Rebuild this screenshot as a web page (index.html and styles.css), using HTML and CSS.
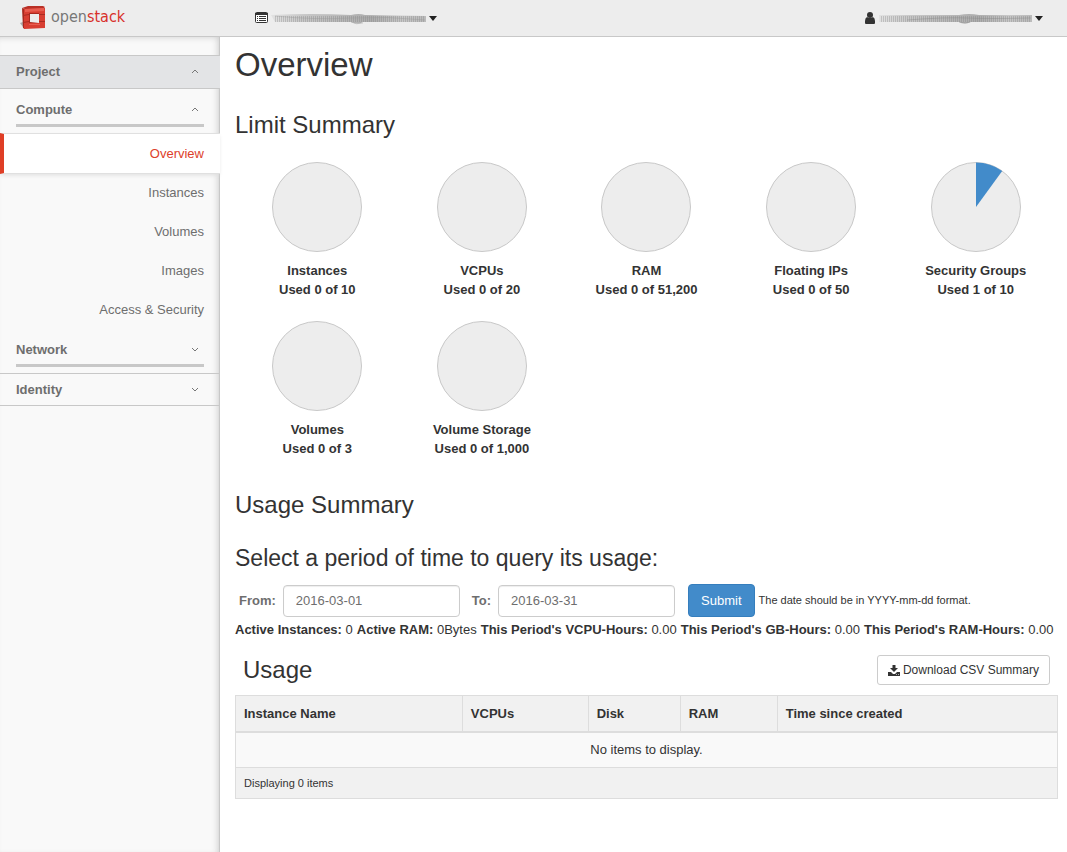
FILE: index.html
```
<!DOCTYPE html>
<html lang="en">
<head>
<meta charset="utf-8">
<title>Overview - OpenStack Dashboard</title>
<meta name="viewport" content="width=device-width, initial-scale=1">
<link rel="stylesheet" href="styles.css">
</head>
<body>
<header class="topbar">
  <a class="brand" href="#" aria-label="openstack">
    <svg class="brand-mark" width="27" height="26" viewBox="0 0 27 26" aria-hidden="true">
      <path d="M0 18l3-1v5z" fill="#aaa"/>
      <path d="M2 3l3 1v20l-2-1z" fill="#a8281e"/>
      <path d="M2 3L8 1h15l2 1-2 2H5z" fill="#b93026"/>
      <path fill-rule="evenodd" d="M4 4l21-1v20L4 24zM9 8v10h10V8z" fill="#d83e32"/>
      <path d="M5 4l19-1v3L5 7z" fill="#e85d50"/>
      <path d="M9 8h10v1h-9v8l9 1H9z" fill="#a9291f"/>
      <path d="M9 19h11v1H9z" fill="#e85d50"/>
      <path d="M3 10.500l6-1M3 17.500l6-1M19 9.500h6M19 16.500h6" stroke="#aa2b21" fill="none"/>
    </svg>
    <span class="brand-name">open<b>stack</b></span>
  </a>
  <button class="switcher" type="button" aria-label="Project switcher">
    <svg width="14" height="12" viewBox="0 0 14 12" aria-hidden="true">
      <rect x=".5" y=".5" width="12" height="10" rx="1" fill="#fff" stroke="#333"/>
      <path d="M0 1h13v2H0z" fill="#333"/>
      <path d="M2 4.500h1m1 0h7M2 6.500h1m1 0h7M2 8.500h1m1 0h7" stroke="#333"/>
    </svg>
    <svg class="smudge" width="156" height="14" viewBox="0 0 156 14" aria-hidden="true">
      <defs>
        <linearGradient id="shade"><stop offset="0" stop-color="#e2e2e2"/><stop offset=".2" stop-color="#c8c8c8"/><stop offset=".5" stop-color="#b5b5b5"/><stop offset=".65" stop-color="#adadad"/><stop offset=".85" stop-color="#c8c8c8"/><stop offset="1" stop-color="#bbb"/></linearGradient>
        <pattern id="hatch" width="2" height="7" patternUnits="userSpaceOnUse"><path d="M.5 0v7" stroke="#777" stroke-opacity=".3"/></pattern>
      </defs>
      <path d="M0 4q40-2 80 0 8-2 14 0l61 1v6H92q-5 3-12 0H4z" fill="url(#shade)"/>
      <path d="M4 5h150v6H4z" fill="url(#hatch)"/>
      <path d="M4 5q40 4 76 2t74 2M80 11q5 3 12 1" stroke="#999" stroke-opacity=".4" fill="none"/>
    </svg>
    <span class="caret"></span>
  </button>
  <button class="switcher user" type="button" aria-label="User menu">
    <svg width="10" height="12" viewBox="0 0 10 12" aria-hidden="true">
      <circle cx="5" cy="3" r="3" fill="#333"/>
      <path d="M2 5q3 2 6 0 2 1 2 4v2q0 1-1 1H1q-1 0-1-1V9q0-3 2-4z" fill="#333"/>
    </svg>
    <svg class="smudge" width="156" height="14" viewBox="0 0 156 14" aria-hidden="true">
      <path d="M2 4h80q10-2 20 0h53v7H94q-7 3-12 0H2z" fill="url(#shade)"/>
      <path d="M4 5h150v6H4z" fill="url(#hatch)"/>
      <path d="M30 9q40-3 60-2t64 0M82 11q7 2 11 0" stroke="#888" stroke-opacity=".4" fill="none"/>
    </svg>
    <span class="caret"></span>
  </button>
</header>
<div class="shell">
  <nav class="sidebar" aria-label="Main">
    <button class="panel-head open" type="button" aria-expanded="true">Project
      <svg class="chevron" viewBox="0 0 8 5" aria-hidden="true"><path d="M1 4l3-3 3 3"/></svg></button>
    <button class="group-head" type="button" aria-expanded="true"><span class="group-line">Compute
      <svg class="chevron" viewBox="0 0 8 5" aria-hidden="true"><path d="M1 4l3-3 3 3"/></svg></span></button>
    <ul class="links">
      <li><a class="link current" href="#" aria-current="page">Overview</a></li>
      <li><a class="link" href="#">Instances</a></li>
      <li><a class="link" href="#">Volumes</a></li>
      <li><a class="link" href="#">Images</a></li>
      <li><a class="link" href="#">Access &amp; Security</a></li>
    </ul>
    <button class="group-head" type="button" aria-expanded="false"><span class="group-line">Network
      <svg class="chevron" viewBox="0 0 8 5" aria-hidden="true"><path d="M1 1l3 3 3-3"/></svg></span></button>
    <button class="panel-head" type="button" aria-expanded="false">Identity
      <svg class="chevron" viewBox="0 0 8 5" aria-hidden="true"><path d="M1 1l3 3 3-3"/></svg></button>
  </nav>
  <main class="content">
    <h1 class="title">Overview</h1>
    <section class="limits">
      <h2 class="heading">Limit Summary</h2>
      <div class="quotas">
        <div class="quota"><svg class="pie" viewBox="0 0 90 90"><circle cx="45" cy="45" r="44.500"/></svg><strong>Instances<br>Used 0 of 10</strong></div>
        <div class="quota"><svg class="pie" viewBox="0 0 90 90"><circle cx="45" cy="45" r="44.500"/></svg><strong>VCPUs<br>Used 0 of 20</strong></div>
        <div class="quota"><svg class="pie" viewBox="0 0 90 90"><circle cx="45" cy="45" r="44.500"/></svg><strong>RAM<br>Used 0 of 51,200</strong></div>
        <div class="quota"><svg class="pie" viewBox="0 0 90 90"><circle cx="45" cy="45" r="44.500"/></svg><strong>Floating IPs<br>Used 0 of 50</strong></div>
        <div class="quota"><svg class="pie" viewBox="0 0 90 90"><circle cx="45" cy="45" r="44.500"/><path d="M45 45V.5A44.500 44.500 0 0 1 71.200 9z"/></svg><strong>Security Groups<br>Used 1 of 10</strong></div>
        <div class="quota"><svg class="pie" viewBox="0 0 90 90"><circle cx="45" cy="45" r="44.500"/></svg><strong>Volumes<br>Used 0 of 3</strong></div>
        <div class="quota"><svg class="pie" viewBox="0 0 90 90"><circle cx="45" cy="45" r="44.500"/></svg><strong>Volume Storage<br>Used 0 of 1,000</strong></div>
      </div>
    </section>
    <section class="usage">
      <h2 class="heading">Usage Summary</h2>
      <form class="period">
        <h3 class="subheading">Select a period of time to query its usage:</h3>
        <div class="fields">
          <label class="field-label" for="from">From:</label>
          <input class="field" id="from" type="text" value="2016-03-01">
          <label class="field-label" for="to">To:</label>
          <input class="field" id="to" type="text" value="2016-03-31">
          <button class="submit" type="submit">Submit</button>
          <small class="hint">The date should be in YYYY-mm-dd format.</small>
        </div>
      </form>
      <p class="stats">
        <span><b>Active Instances:</b> 0</span>
        <span><b>Active RAM:</b> 0Bytes</span>
        <span><b>This Period's VCPU-Hours:</b> 0.00</span>
        <span><b>This Period's GB-Hours:</b> 0.00</span>
        <span><b>This Period's RAM-Hours:</b> 0.00</span>
      </p>
      <div class="table-bar">
        <h2 class="heading" id="usage-title">Usage</h2>
        <a class="download" href="#">
          <svg width="12" height="11" viewBox="0 0 12 11" aria-hidden="true">
            <path d="M4.500 0h3v3H10L6 7 2 3h2.500z" fill="#333"/>
            <path d="M0 7h3l2 2h2l2-2h3v4H0z" fill="#333"/>
            <path d="M8 9.500h1m1 0h1" stroke="#fff" stroke-opacity=".6"/>
          </svg>Download CSV Summary</a>
      </div>
      <table class="table" aria-labelledby="usage-title">
        <colgroup><col class="c-name"><col class="c-cpu"><col class="c-disk"><col class="c-ram"><col></colgroup>
        <thead><tr><th>Instance Name</th><th>VCPUs</th><th>Disk</th><th>RAM</th><th>Time since created</th></tr></thead>
        <tbody><tr><td colspan="5">No items to display.</td></tr></tbody>
        <tfoot><tr><td colspan="5">Displaying 0 items</td></tr></tfoot>
      </table>
    </section>
  </main>
</div>
</body>
</html>
```
FILE: styles.css
```
* { box-sizing: border-box; }
body {
  margin: 0;
  min-height: 100vh;
  display: flex;
  flex-direction: column;
  font: 13px/19px "Liberation Sans", Arial, sans-serif;
  color: #333;
  background: #fff;
}
button, input { font: inherit; color: inherit; }
a { text-decoration: none; }
h1, h2, h3, p, ul { margin: 0; padding: 0; font-weight: normal; }

.topbar {
  display: flex;
  align-items: center;
  height: 37px;
  padding: 0 24px 0 20px;
  background: #ededed;
  border-bottom: 1px solid #c8c8c8;
}
.brand { display: flex; align-items: center; gap: 4px; width: 235px; color: #777; }
.brand-name { padding-bottom: 2px; font: 16px/20px "DejaVu Sans Condensed", "DejaVu Sans", sans-serif; }
.brand-name b { font-weight: normal; color: #d8302a; }
.switcher { display: flex; align-items: center; gap: 2px; padding: 0; border: 0; background: none; }
.user { margin-left: auto; }
.caret { border: 4px solid transparent; border-top: 5px solid #222; border-bottom: 0; }

.shell { flex: 1; display: flex; }
.sidebar {
  flex: 0 0 220px;
  min-width: 0;
  padding-top: 18px;
  background: #f9f9f9;
  border-right: 1px solid #c8c8c8;
  box-shadow: inset -3px 2px 6px -2px #ccc;
  color: #6e6e6e;
}
.panel-head, .group-line { display: flex; align-items: center; justify-content: space-between; }
.panel-head {
  width: 100%;
  height: 33px;
  padding: 0 20px 1px 16px;
  border: solid #c8c8c8;
  border-width: 1px 0;
  background: none;
  font-weight: bold;
}
.panel-head.open { width: calc(100% + 1px); height: 34px; padding-right: 21px; background: #e3e4e6; }
.group-head { display: block; width: 100%; padding: 8px 15px 6px 16px; border: 0; background: none; font-weight: bold; }
.group-line { height: 30px; padding: 0 5px 2px 0; border-bottom: 3px solid #c8c8c8; }
.chevron { width: 8px; height: 5px; fill: none; stroke: #777; }
.links { margin-bottom: -1px; list-style: none; }
.link { display: block; height: 39px; padding: 9px 15px 0 0; text-align: right; color: #6e6e6e; }
.link.current {
  width: calc(100% + 1px);
  height: 41px;
  padding: 10px 16px 0 0;
  background: #fff;
  border: solid #e0e0e0;
  border-width: 1px 0;
  border-left: 4px solid #df3e26;
  box-shadow: 0 2px 4px -1px #ddd;
  color: #dd3f2b;
}

.content { flex: 1; min-width: 0; padding: 6px 9px 20px 15px; }
.title { font-size: 33px; line-height: 44px; }
.heading { font-size: 24px; line-height: 32px; }
.subheading { font-size: 23px; line-height: 32px; }
.limits { padding-top: 22px; }
.quotas { display: grid; grid-template-columns: repeat(5, 1fr); row-gap: 22px; padding-top: 21px; }
.quota { display: flex; flex-direction: column; align-items: center; gap: 9px; text-align: center; }
.pie { width: 90px; height: 90px; fill: #ededed; stroke: #c8c8c8; }
.pie path { fill: #428bca; stroke: none; }

.usage { padding-top: 31px; }
.period { padding-top: 21px; }
.fields { display: flex; align-items: center; padding-top: 10px; }
.field-label { margin: 0 7px 0 4px; font-weight: bold; color: #6e6e6e; }
.field {
  width: 177px;
  height: 32px;
  margin-right: 8px;
  padding: 0 12px;
  border: 1px solid #ccc;
  border-radius: 4px;
  background: #fff;
  box-shadow: inset 0 1px 1px #eee;
  color: #6e6e6e;
}
.submit { height: 33px; margin: 0 4px 0 5px; padding: 0 12px; border: 1px solid #357ebd; border-radius: 4px; background: #428bca; color: #fff; }
.hint { font-size: 11px; }
.stats { display: flex; flex-wrap: wrap; column-gap: 4px; padding-top: 3px; }
.table-bar { display: flex; align-items: center; justify-content: space-between; padding: 15px 8px 9px; }
.download {
  display: flex;
  align-items: center;
  gap: 3px;
  height: 30px;
  padding: 0 10px;
  border: 1px solid #ccc;
  border-radius: 3px;
  font-size: 12px;
  color: #333;
}
.table { width: 100%; table-layout: fixed; border-collapse: collapse; border: 1px solid #ddd; }
.table th { height: 36px; padding: 0 8px; text-align: left; background: #f1f1f1; border: 1px solid #ddd; border-bottom-width: 2px; }
.table td { height: 36px; padding: 0 8px; text-align: center; background: #f9f9f9; }
.table tfoot td { height: 31px; text-align: left; font-size: 11px; background: #f1f1f1; border-top: 1px solid #ddd; }
.c-name { width: 27.6%; }
.c-cpu { width: 15.3%; }
.c-disk { width: 11.2%; }
.c-ram { width: 11.8%; }
```
